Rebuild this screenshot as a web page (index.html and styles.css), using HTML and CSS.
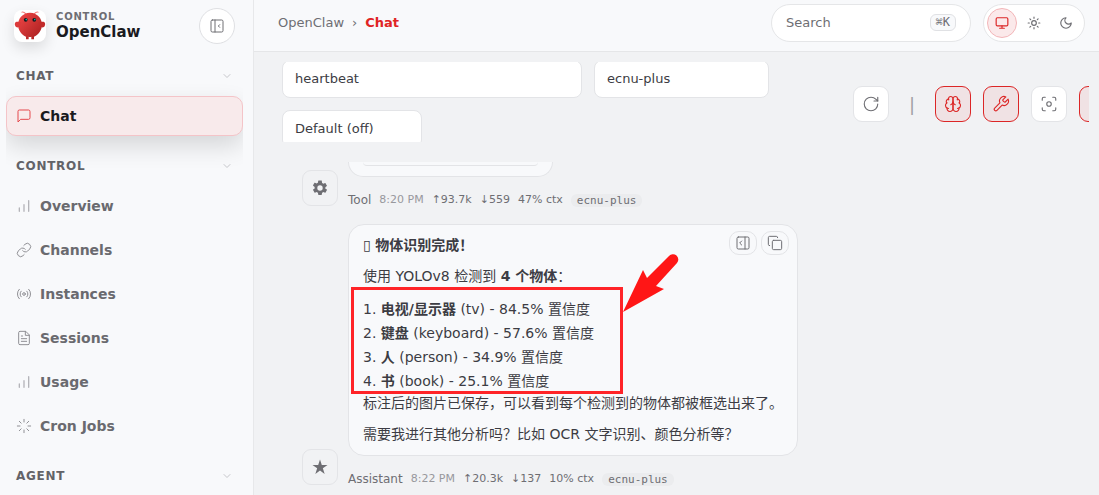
FILE: index.html
```html
<!DOCTYPE html>
<html lang="zh-CN">
  <head>
    <meta charset="UTF-8" />
    <meta name="viewport" content="width=device-width, initial-scale=1.0" />
    <title>OpenClaw Control</title>
    <link rel="stylesheet" href="styles.css">
  </head>
  <body>
    <!-- Shared icons -->
    <svg class="sprite" aria-hidden="true">
      <symbol id="icon-chevron" viewBox="0 0 24 24"><path d="m6 9 6 6 6-6" /></symbol>
      <symbol id="icon-bars" viewBox="0 0 24 24"><path d="M5 20v-5M12 20V10M19 20V4" /></symbol>
    </svg>

    <div class="shell">
      <!-- Sidebar -->
      <aside class="sidebar">
        <div class="brand">
          <div class="brand-logo">
            <svg viewBox="0 0 120 120">
              <defs>
                <linearGradient id="claw" x1="0" y1="0" x2="1" y2="1">
                  <stop offset="0" stop-color="#f24848" />
                  <stop offset="1" stop-color="#a51d1d" />
                </linearGradient>
              </defs>
              <path d="M45 15Q35 5 30 8M75 15Q85 5 90 8" fill="none" stroke="#f27a7a" stroke-width="4" stroke-linecap="round" />
              <path d="M60 10C30 10 15 35 15 55s15 40 30 45v10h10v-10q5 2 10 0v10h10v-10c15-5 30-25 30-45S90 10 60 10z" fill="url(#claw)" />
              <path d="M20 45C5 40 0 50 5 60s15 5 20-5 0-10-5-10z" fill="#dc3a3a" />
              <path d="M100 45c15-5 20 5 15 15s-15 5-20-5 0-10 5-10z" fill="#c22a2a" />
              <circle cx="44" cy="37" r="7" fill="#10191f" />
              <circle cx="76" cy="37" r="7" fill="#10191f" />
              <circle cx="46" cy="36" r="3" fill="#20b8a8" />
              <circle cx="78" cy="36" r="3" fill="#20b8a8" />
            </svg>
          </div>
          <div class="brand-text">
            <span class="brand-eyebrow">CONTROL</span>
            <span class="brand-title">OpenClaw</span>
          </div>
          <button type="button" class="collapse-button" aria-label="Collapse sidebar">
            <svg class="icon" viewBox="0 0 24 24"><rect x="3" y="3" width="18" height="18" rx="2" /><path d="M9 3v18M16 10l-2 2 2 2" /></svg>
          </button>
        </div>

        <nav class="nav">
          <button type="button" class="nav-label">CHAT <svg class="icon chevron"><use href="#icon-chevron" /></svg></button>
          <a class="nav-item active" href="#chat">
            <svg class="icon" viewBox="0 0 24 24"><path d="M21 15a2 2 0 0 1-2 2H7l-4 4V5a2 2 0 0 1 2-2h14a2 2 0 0 1 2 2z" /></svg>
            Chat
          </a>

          <button type="button" class="nav-label">CONTROL <svg class="icon chevron"><use href="#icon-chevron" /></svg></button>
          <a class="nav-item" href="#overview"><svg class="icon bars"><use href="#icon-bars" /></svg>Overview</a>
          <a class="nav-item" href="#channels">
            <svg class="icon" viewBox="0 0 24 24"><path d="M10 13a5 5 0 0 0 7.54.54l3-3a5 5 0 0 0-7.07-7.07l-1.72 1.71" /><path d="M14 11a5 5 0 0 0-7.54-.54l-3 3a5 5 0 0 0 7.07 7.07l1.71-1.71" /></svg>
            Channels
          </a>
          <a class="nav-item" href="#instances">
            <svg class="icon" viewBox="0 0 24 24"><circle cx="12" cy="12" r="2" /><path d="M16.24 7.76a6 6 0 0 1 0 8.49M7.76 16.24a6 6 0 0 1 0-8.49M19.07 4.93a10 10 0 0 1 0 14.14M4.93 19.07a10 10 0 0 1 0-14.14" /></svg>
            Instances
          </a>
          <a class="nav-item" href="#sessions">
            <svg class="icon" viewBox="0 0 24 24"><path d="M14 2H6a2 2 0 0 0-2 2v16a2 2 0 0 0 2 2h12a2 2 0 0 0 2-2V8z" /><path d="M14 2v6h6M16 13H8M16 17H8M10 9H8" /></svg>
            Sessions
          </a>
          <a class="nav-item" href="#usage"><svg class="icon bars"><use href="#icon-bars" /></svg>Usage</a>
          <a class="nav-item" href="#cron">
            <svg class="icon" viewBox="0 0 24 24"><path d="M12 2v4M12 18v4M4.93 4.93l2.83 2.83M16.24 16.24l2.83 2.83M2 12h4M18 12h4M4.93 19.07l2.83-2.83M16.24 7.76l2.83-2.83" /></svg>
            Cron Jobs
          </a>

          <button type="button" class="nav-label">AGENT <svg class="icon chevron"><use href="#icon-chevron" /></svg></button>
        </nav>
      </aside>

      <div class="main">
        <!-- Top bar -->
        <header class="topbar">
          <div class="breadcrumb">
            <a href="#home">OpenClaw</a>
            <span class="sep">›</span>
            <span class="current">Chat</span>
          </div>
          <button type="button" class="search">
            <span>Search</span>
            <kbd>⌘K</kbd>
          </button>
          <div class="theme-switch">
            <button type="button" class="theme-button selected" aria-label="System theme">
              <svg class="icon" viewBox="0 0 24 24"><rect x="2" y="3" width="20" height="14" rx="2" /><path d="M8 21h8M12 17v4" /></svg>
            </button>
            <button type="button" class="theme-button" aria-label="Light theme">
              <svg class="icon" viewBox="0 0 24 24"><circle cx="12" cy="12" r="4" /><path d="M12 2v2M12 20v2M4.93 4.93l1.41 1.41M17.66 17.66l1.41 1.41M2 12h2M20 12h2M6.34 17.66l-1.41 1.41M19.07 4.93l-1.41 1.41" /></svg>
            </button>
            <button type="button" class="theme-button" aria-label="Dark theme">
              <svg class="icon" viewBox="0 0 24 24"><path d="M12 3a6 6 0 0 0 9 9 9 9 0 1 1-9-9z" /></svg>
            </button>
          </div>
        </header>

        <main class="content">
          <!-- Chat controls -->
          <div class="controls">
            <div class="controls-row">
              <div class="selects">
                <select class="select session" aria-label="Session"><option>heartbeat</option></select>
                <select class="select model" aria-label="Model"><option>ecnu-plus</option></select>
                <select class="select thinking" aria-label="Thinking level"><option>Default (off)</option></select>
              </div>
              <div class="actions">
                <button type="button" class="action" aria-label="Refresh">
                  <svg class="icon" viewBox="0 0 24 24"><path d="M21 12a9 9 0 1 1-9-9c2.52 0 4.93 1 6.74 2.74L21 8" /><path d="M21 3v5h-5" /></svg>
                </button>
                <span class="divider">|</span>
                <button type="button" class="action on" aria-label="Show thinking">
                  <svg class="icon" viewBox="0 0 24 24"><path d="M12 5a3 3 0 1 0-5.997.125 4 4 0 0 0-2.526 5.77 4 4 0 0 0 .556 6.588A4 4 0 1 0 12 18Z" /><path d="M12 5a3 3 0 1 1 5.997.125 4 4 0 0 1 2.526 5.77 4 4 0 0 1-.556 6.588A4 4 0 1 1 12 18Z" /><path d="M15 13a4.5 4.5 0 0 1-3-4 4.5 4.5 0 0 1-3 4M17.599 6.5a3 3 0 0 0 .399-1.375M6.003 5.125A3 3 0 0 0 6.401 6.5M3.477 10.896a4 4 0 0 1 .585-.396M19.938 10.5a4 4 0 0 1 .585.396M6 18a4 4 0 0 1-1.967-.516M19.967 17.484A4 4 0 0 1 18 18" /></svg>
                </button>
                <button type="button" class="action on" aria-label="Show tools">
                  <svg class="icon" viewBox="0 0 24 24"><path d="M14.7 6.3a1 1 0 0 0 0 1.4l1.6 1.6a1 1 0 0 0 1.4 0l3.77-3.77a6 6 0 0 1-7.94 7.94l-6.91 6.91a2.12 2.12 0 0 1-3-3l6.91-6.91a6 6 0 0 1 7.94-7.94l-3.76 3.76z" /></svg>
                </button>
                <button type="button" class="action" aria-label="Focus mode">
                  <svg class="icon" viewBox="0 0 24 24"><circle cx="12" cy="12" r="3" /><path d="M3 7V5a2 2 0 0 1 2-2h2M17 3h2a2 2 0 0 1 2 2v2M21 17v2a2 2 0 0 1-2 2h-2M7 21H5a2 2 0 0 1-2-2v-2" /></svg>
                </button>
                <button type="button" class="action on" aria-label="Cron sessions"></button>
              </div>
            </div>
          </div>

          <!-- Messages -->
          <div class="thread">
            <div class="group">
              <div class="avatar">
                <svg viewBox="0 0 24 24"><path d="M19.14 12.94c.04-.3.06-.61.06-.94s-.02-.64-.07-.94l2.03-1.58a.5.5 0 0 0 .12-.61l-1.92-3.32a.5.5 0 0 0-.59-.22l-2.39.96a7 7 0 0 0-1.62-.94l-.36-2.54A.5.5 0 0 0 13.92 2h-3.84a.5.5 0 0 0-.47.41l-.36 2.54a7.4 7.4 0 0 0-1.62.94l-2.39-.96a.5.5 0 0 0-.59.22L2.74 8.47a.5.5 0 0 0 .12.61l2.03 1.58a6 6 0 0 0 0 1.88l-2.03 1.58a.5.5 0 0 0-.12.61l1.92 3.32c.12.22.37.29.59.22l2.39-.96c.5.38 1.03.7 1.62.94l.36 2.54c.05.24.24.41.48.41h3.84c.24 0 .44-.17.47-.41l.36-2.54a7 7 0 0 0 1.62-.94l2.39.96c.22.08.47 0 .59-.22l1.92-3.32a.5.5 0 0 0-.12-.61zM12 15.6A3.6 3.6 0 1 1 12 8.4a3.6 3.6 0 0 1 0 7.2z" /></svg>
              </div>
              <div class="messages">
                <div class="bubble tool-bubble"><div class="tool-card"></div></div>
                <div class="meta">
                  <span class="sender">Tool</span>
                  <span class="time">8:20 PM</span>
                  <span>↑93.7k</span>
                  <span>↓559</span>
                  <span>47% ctx</span>
                  <span class="model-tag">ecnu-plus</span>
                </div>
              </div>
            </div>

            <div class="group">
              <div class="avatar">
                <svg viewBox="0 0 24 24"><path d="m12 2 2.4 7.3H22l-6.200 4.500 2.400 7.400-6.200-4.600-6.200 4.600 2.400-7.400L2 9.300h7.600z" /></svg>
              </div>
              <div class="messages">
                <div class="bubble">
                  <div class="bubble-actions">
                    <button type="button" aria-label="Open in side panel">
                      <svg class="icon" viewBox="0 0 24 24"><rect x="3" y="3" width="18" height="18" rx="2" /><path d="M15 3v18M10 9l-3 3 3 3" /></svg>
                    </button>
                    <button type="button" aria-label="Copy message">
                      <svg class="icon" viewBox="0 0 24 24"><rect x="8" y="8" width="14" height="14" rx="2" /><path d="M4 16a2 2 0 0 1-2-2V4a2 2 0 0 1 2-2h10a2 2 0 0 1 2 2" /></svg>
                    </button>
                  </div>
                  <p>▯ <strong>物体识别完成！</strong></p>
                  <p>使用 YOLOv8 检测到 <strong>4 个物体</strong>：</p>
                  <ol>
                    <li><strong>电视/显示器</strong> (tv) - 84.5% 置信度</li>
                    <li><strong>键盘</strong> (keyboard) - 57.6% 置信度</li>
                    <li><strong>人</strong> (person) - 34.9% 置信度</li>
                    <li><strong>书</strong> (book) - 25.1% 置信度</li>
                  </ol>
                  <p>标注后的图片已保存，可以看到每个检测到的物体都被框选出来了。</p>
                  <p>需要我进行其他分析吗？比如 OCR 文字识别、颜色分析等？</p>

                  <!-- Highlight over the detection results -->
                  <div class="highlight"></div>
                  <svg class="arrow" viewBox="0 0 58 62"><path d="M2 60 22 18 26 26 48 4A5 5 0 0 1 56 11L35 34 43 37Z" /></svg>
                </div>
                <div class="meta">
                  <span class="sender">Assistant</span>
                  <span class="time">8:22 PM</span>
                  <span>↑20.3k</span>
                  <span>↓137</span>
                  <span>10% ctx</span>
                  <span class="model-tag">ecnu-plus</span>
                </div>
              </div>
            </div>
          </div>
        </main>
      </div>
    </div>
  </body>
</html>
```
FILE: styles.css
```css
* {
  box-sizing: border-box;
}

body {
  margin: 0;
  font-family: "DejaVu Sans", "Noto Sans CJK SC", sans-serif;
  font-size: 14px;
  color: #3c3c43;
  background-color: #f1f2f4;
}

button,
select {
  font-family: inherit;
  color: inherit;
  margin: 0;
  padding: 0;
}

a {
  color: inherit;
  text-decoration: none;
}

.sprite {
  display: none;
}

.icon {
  width: 16px;
  height: 16px;
  flex: none;
  fill: none;
  stroke: currentColor;
  stroke-width: 1.5;
  stroke-linecap: round;
  stroke-linejoin: round;
}

.shell {
  display: flex;
  height: 100vh;
  overflow: hidden;
}

/* Sidebar */
.sidebar {
  width: 254px;
  flex: none;
  display: flex;
  flex-direction: column;
  background-color: #f8f9fb;
  border-right: 1px solid #e7e8ea;
}

.brand {
  display: flex;
  align-items: center;
  gap: 10px;
  padding: 8px 18px 4px 14px;
}

.brand-logo {
  width: 32px;
  height: 32px;
  border-radius: 8px;
  background-color: #fff;
  box-shadow: 0 6px 14px rgba(0, 0, 0, 0.12);
}

.brand-logo svg {
  display: block;
  width: 32px;
  height: 32px;
}

.brand-text {
  flex: 1;
  display: flex;
  flex-direction: column;
}

.brand-eyebrow {
  font-size: 10px;
  line-height: 12px;
  font-weight: bold;
  letter-spacing: 0.08em;
  color: #6e6e73;
}

.brand-title {
  font-size: 15px;
  line-height: 18px;
  font-weight: bold;
  color: #1a1a1e;
}

.collapse-button {
  width: 36px;
  height: 36px;
  display: flex;
  align-items: center;
  justify-content: center;
  background-color: #fff;
  border: 1px solid #dfe0e3;
  border-radius: 50%;
  color: #6e6e73;
}

.nav {
  flex: 1;
  margin: 0 10px 0 6px;
  padding-top: 12px;
  display: flex;
  flex-direction: column;
  overflow: hidden;
}

.nav-label {
  display: flex;
  flex: none;
  align-items: center;
  justify-content: space-between;
  height: 32px;
  padding: 0 10px;
  border: none;
  background: none;
  font-size: 12px;
  font-weight: bold;
  letter-spacing: 0.06em;
  color: #636368;
}

.nav-item + .nav-label {
  margin-top: 14px;
}

.chevron {
  width: 12px;
  height: 12px;
  color: #b4b4b9;
}

.nav-item {
  display: flex;
  flex: none;
  align-items: center;
  gap: 8px;
  height: 40px;
  margin-top: 4px;
  padding: 0 9px;
  border: 1px solid transparent;
  border-radius: 10px;
  font-weight: bold;
  color: #6a6a6f;
}

.nav-item .icon {
  color: #909095;
}

.nav-item .bars {
  color: #b4b4b9;
  stroke-width: 2;
}

.nav-item.active {
  color: #1a1a1e;
  background-color: #f8eaeb;
  border-color: #f4c4c8;
  box-shadow: 0 10px 24px rgba(0, 0, 0, 0.14);
}

.nav-item.active .icon {
  color: #e5484d;
}

/* Top bar */
.main {
  flex: 1;
  min-width: 0;
  display: flex;
  flex-direction: column;
}

.topbar {
  display: flex;
  align-items: center;
  gap: 12px;
  padding: 4px 14px 9px 24px;
  background-color: #f8f9fb;
  border-bottom: 1px solid #e5e6e8;
}

.breadcrumb {
  flex: 1;
  display: flex;
  gap: 8px;
  padding-bottom: 2px;
  font-size: 13px;
  color: #6e6e73;
}

.breadcrumb .current {
  font-weight: bold;
  color: #e02424;
}

.search {
  width: 200px;
  height: 38px;
  display: flex;
  align-items: center;
  justify-content: space-between;
  padding: 0 14px 2px;
  border: 1px solid #e5e6e8;
  border-radius: 19px;
  background-color: #fff;
  font-size: 13px;
  color: #6e6e73;
}

.search kbd {
  padding: 0 5px;
  border: 1px solid #e0e1e4;
  border-radius: 6px;
  background-color: #f8f9fb;
  font-family: "DejaVu Sans Mono", monospace;
  font-size: 12px;
  line-height: 15px;
}

.theme-switch {
  display: flex;
  gap: 2px;
  padding: 3px;
  border: 1px solid #e5e6e8;
  border-radius: 19px;
  background-color: #fff;
}

.theme-button {
  width: 30px;
  height: 30px;
  display: flex;
  align-items: center;
  justify-content: center;
  border: 1px solid transparent;
  border-radius: 50%;
  background: none;
  color: #6e6e73;
}

.theme-button .icon {
  width: 14px;
  height: 14px;
  stroke-width: 2;
}

.theme-button.selected {
  border-color: #f3b6b9;
  background-color: #fbe9ea;
  color: #dc2626;
}

/* Chat controls */
.content {
  flex: 1;
  min-height: 0;
  display: flex;
  flex-direction: column;
  gap: 20px;
  padding: 10px 10px 0 28px;
}

.controls {
  height: 80px;
  flex: none;
  overflow: hidden;
}

.controls-row {
  display: flex;
  align-items: center;
  gap: 12px;
  margin: -2px -26px 0 0;
}

.selects {
  flex: 1;
  display: flex;
  flex-wrap: wrap;
  gap: 12px;
}

.select {
  appearance: none;
  height: 38px;
  padding: 0 12px 2px;
  border: 1px solid #e3e4e7;
  border-radius: 8px;
  background-color: #fff;
  font-size: 13px;
}

.session {
  width: 300px;
}

.model {
  width: 175px;
}

.thinking {
  width: 140px;
}

.actions {
  display: flex;
  align-items: center;
  gap: 12px;
}

.divider {
  width: 22px;
  text-align: center;
  font-size: 18px;
  color: #a0a0a5;
}

.action {
  width: 36px;
  height: 36px;
  display: flex;
  align-items: center;
  justify-content: center;
  border: 1px solid #e3e4e7;
  border-radius: 9px;
  background-color: #fff;
  color: #6e6e73;
}

.action .icon {
  width: 18px;
  height: 18px;
}

.action.on {
  border-color: #dc2626;
  background-color: #f0e2e4;
  color: #dc2626;
}

/* Messages */
.thread {
  flex: 1;
  min-height: 0;
  padding-left: 20px;
  overflow: hidden;
}

.group {
  display: flex;
  align-items: flex-end;
  gap: 10px;
  margin-bottom: 15px;
}

.avatar {
  width: 36px;
  height: 36px;
  flex: none;
  display: flex;
  align-items: center;
  justify-content: center;
  margin-bottom: 3px;
  border: 1px solid #e3e4e7;
  border-radius: 9px;
}

.avatar svg {
  width: 18px;
  height: 18px;
  fill: #6e6e73;
}

.bubble {
  position: relative;
  width: fit-content;
  padding: 10px 14px;
  border: 1px solid #e3e4e7;
  border-radius: 16px;
  background-color: #f8f9fb;
}

.bubble p {
  margin: 0 0 10px;
  line-height: 21px;
}

.bubble p:last-of-type {
  margin-bottom: 0;
}

.bubble ol {
  margin: 0;
  padding: 0;
  line-height: 24px;
  list-style-position: inside;
}

.tool-bubble {
  width: 205px;
  height: 15px;
  padding-top: 0;
  border-top: none;
  border-radius: 0 0 16px 16px;
}

.tool-card {
  height: 4px;
  border-bottom: 1px solid #e3e4e7;
  border-radius: 0 0 8px 8px;
}

.bubble-actions {
  position: absolute;
  top: 6px;
  right: 8px;
  display: flex;
  gap: 4px;
}

.bubble-actions button {
  width: 28px;
  height: 24px;
  display: flex;
  align-items: center;
  justify-content: center;
  border: 1px solid #e3e4e7;
  border-radius: 10px;
  background: none;
  color: #6e6e73;
}

.highlight {
  position: absolute;
  top: 62px;
  left: 2px;
  width: 272px;
  height: 107px;
  border: 3px solid #ff2428;
}

.arrow {
  position: absolute;
  top: 27px;
  left: 272px;
  width: 58px;
  height: 62px;
  fill: #ff1616;
}

.meta {
  display: flex;
  align-items: center;
  gap: 8px;
  margin-top: 14px;
  font-size: 11px;
  line-height: 18px;
  color: #6e6e73;
}

.meta .sender {
  font-size: 12px;
}

.meta .time {
  color: #98989d;
}

.model-tag {
  padding: 0 6px;
  border-radius: 6px;
  background-color: #ebecee;
  font-family: "DejaVu Sans Mono", monospace;
  line-height: 13px;
}
```
